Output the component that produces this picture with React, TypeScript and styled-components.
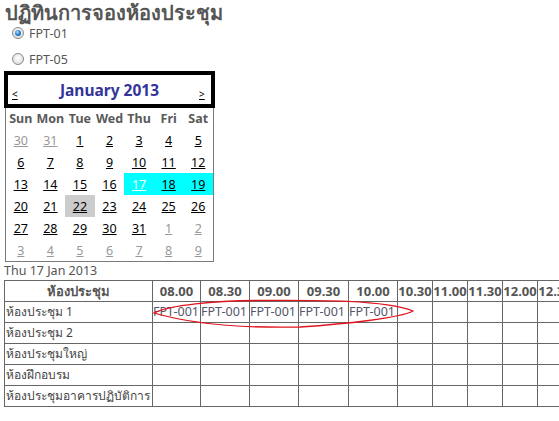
import React from "react";
import styled, { createGlobalStyle } from "styled-components";

const GlobalStyle = createGlobalStyle`
  html, body {
    margin: 0;
    padding: 0;
    background: #ffffff;
    overflow: hidden;
  }
  body {
    font-family: "Noto Sans", Tahoma, "DejaVu Sans", sans-serif;
    font-size: 12.5px;
    color: #555555;
  }
`;

const Page = styled.div`
  padding: 2px 0 0 4px;
  width: 900px;
`;

const Title = styled.h1`
  margin: 0 0 0 1px;
  font-size: 20px;
  line-height: 22px;
  font-weight: bold;
  color: #555555;
`;

const RadioList = styled.div`
  display: flex;
  flex-direction: column;
  margin-top: -4px;
`;

const RadioRow = styled.label`
  display: flex;
  align-items: center;
  height: 26px;
  padding-left: 8px;
  gap: 5px;
  color: #555555;
  font-size: 12.5px;
`;

const RadioDot = styled.span<{ $checked?: boolean }>`
  position: relative;
  width: 12px;
  height: 12px;
  border-radius: 50%;
  border: 1px solid #8a8a8a;
  background: radial-gradient(circle at 50% 40%, #ffffff 0%, #e6e6e6 60%, #cfcfcf 100%);
  box-sizing: border-box;
  &::after {
    content: "";
    display: ${(p) => (p.$checked ? "block" : "none")};
    position: absolute;
    left: 2px;
    top: 2px;
    width: 6px;
    height: 6px;
    border-radius: 50%;
    background: radial-gradient(circle at 40% 35%, #a8dcff 0%, #2a7fd0 50%, #0b3c74 100%);
  }
`;

const Calendar = styled.div`
  width: 211px;
  margin-top: -1px;
`;

const CalTitle = styled.div`
  border: 4px solid #000000;
  height: 29px;
  display: flex;
  align-items: center;
  padding: 0 4px;
`;

const NavLink = styled.span`
  align-self: flex-end;
  padding-bottom: 5px;
  font-size: 10px;
  line-height: 10px;
  color: #000000;
  text-decoration: underline;
  width: 8px;
`;

const MonthLabel = styled.div`
  flex: 1;
  text-align: center;
  font-weight: bold;
  font-size: 15.5px;
  color: #333399;
  padding-top: 1px;
`;

const DaysGrid = styled.div`
  margin-left: 1px;
  width: 209px;
  box-sizing: border-box;
  border: 1px solid #7a7a7a;
  border-top: none;
  display: grid;
  grid-template-columns: repeat(7, 1fr);
  grid-auto-rows: 22px;
  grid-template-rows: 21px;
`;

const DayName = styled.div`
  display: flex;
  align-items: center;
  justify-content: center;
  font-weight: bold;
  color: #5a5a5a;
  font-size: 12.5px;
`;

const DayCell = styled.div<{ $other?: boolean; $week?: boolean; $selected?: boolean; $today?: boolean }>`
  display: flex;
  align-items: center;
  justify-content: center;
  font-size: 12.5px;
  text-decoration: underline;
  color: ${(p) => (p.$today ? "#ffffff" : p.$other ? "#999999" : "#000000")};
  background: ${(p) => (p.$week ? "#00ffff" : p.$selected ? "#cccccc" : "transparent")};
`;

const DateLabel = styled.div`
  height: 18px;
  line-height: 18px;
  color: #555555;
  font-size: 12.5px;
`;

const TableWrap = styled.div`
  position: relative;
`;

const Schedule = styled.table<{ $width: number }>`
  border-collapse: collapse;
  table-layout: fixed;
  width: ${(p) => p.$width}px;
  border: 1px solid #666666;
`;

const HeadCell = styled.th`
  border: 1px solid #666666;
  height: 20px;
  line-height: 18px;
  padding: 0;
  font-weight: bold;
  font-size: 13px;
  color: #555555;
  text-align: center;
  white-space: nowrap;
  overflow: hidden;
`;

const RoomCell = styled.td`
  border: 1px solid #666666;
  height: 20px;
  line-height: 18px;
  padding: 0 0 0 1px;
  color: #444444;
  font-size: 12px;
  white-space: nowrap;
  overflow: hidden;
`;

const SlotCell = styled.td`
  border: 1px solid #666666;
  height: 20px;
  line-height: 18px;
  padding: 0;
  color: #55556a;
  font-size: 12.5px;
  text-align: left;
  white-space: nowrap;
  overflow: hidden;
`;

const Circle = styled.svg`
  position: absolute;
  left: 0;
  top: 0;
  width: 460px;
  height: 60px;
  pointer-events: none;
  overflow: visible;
`;

const weeks: { d: number; other?: boolean }[][] = [
  [{ d: 30, other: true }, { d: 31, other: true }, { d: 1 }, { d: 2 }, { d: 3 }, { d: 4 }, { d: 5 }],
  [6, 7, 8, 9, 10, 11, 12].map((d) => ({ d })),
  [13, 14, 15, 16, 17, 18, 19].map((d) => ({ d })),
  [20, 21, 22, 23, 24, 25, 26].map((d) => ({ d })),
  [{ d: 27 }, { d: 28 }, { d: 29 }, { d: 30 }, { d: 31 }, { d: 1, other: true }, { d: 2, other: true }],
  [3, 4, 5, 6, 7, 8, 9].map((d) => ({ d, other: true })),
];

const ROOM_COL = 148;

const slots = [
  { t: "08.00", w: 48 },
  { t: "08.30", w: 49 },
  { t: "09.00", w: 49 },
  { t: "09.30", w: 50 },
  { t: "10.00", w: 49 },
  { t: "10.30", w: 35 },
  { t: "11.00", w: 35 },
  { t: "11.30", w: 35 },
  { t: "12.00", w: 35 },
  { t: "12.30", w: 35 },
  { t: "13.00", w: 35 },
  { t: "13.30", w: 35 },
];

const tableWidth = ROOM_COL + slots.reduce((a, s) => a + s.w, 0);

const rooms = [
  { name: "ห้องประชุม 1", booked: 5 },
  { name: "ห้องประชุม 2", booked: 0 },
  { name: "ห้องประชุมใหญ่", booked: 0 },
  { name: "ห้องฝึกอบรม", booked: 0 },
  { name: "ห้องประชุมอาคารปฏิบัติการ", booked: 0 },
];

export default function App() {
  return (
    <>
      <GlobalStyle />
      <Page>
        <Title>ปฏิทินการจองห้องประชุม</Title>
        <RadioList>
          <RadioRow>
            <RadioDot $checked />
            FPT-01
          </RadioRow>
          <RadioRow>
            <RadioDot />
            FPT-05
          </RadioRow>
        </RadioList>
        <Calendar>
          <CalTitle>
            <NavLink>&lt;</NavLink>
            <MonthLabel>January 2013</MonthLabel>
            <NavLink>&gt;</NavLink>
          </CalTitle>
          <DaysGrid>
            {["Sun", "Mon", "Tue", "Wed", "Thu", "Fri", "Sat"].map((n) => (
              <DayName key={n}>{n}</DayName>
            ))}
            {weeks.map((w, wi) =>
              w.map((c, ci) => {
                const week = wi === 2 && ci >= 4;
                return (
                  <DayCell
                    key={`${wi}-${ci}`}
                    $other={c.other}
                    $week={week}
                    $today={wi === 2 && ci === 4}
                    $selected={wi === 3 && ci === 2}
                  >
                    {c.d}
                  </DayCell>
                );
              })
            )}
          </DaysGrid>
        </Calendar>
        <DateLabel>Thu 17 Jan 2013</DateLabel>
        <TableWrap>
          <Schedule $width={tableWidth}>
            <colgroup>
              <col style={{ width: ROOM_COL }} />
              {slots.map((s) => (
                <col key={s.t} style={{ width: s.w }} />
              ))}
            </colgroup>
            <thead>
              <tr>
                <HeadCell>ห้องประชุม</HeadCell>
                {slots.map((s) => (
                  <HeadCell key={s.t}>{s.t}</HeadCell>
                ))}
              </tr>
            </thead>
            <tbody>
              {rooms.map((r) => (
                <tr key={r.name}>
                  <RoomCell>{r.name}</RoomCell>
                  {slots.map((s, i) => (
                    <SlotCell key={s.t}>{i < r.booked ? "FPT-001" : ""}</SlotCell>
                  ))}
                </tr>
              ))}
            </tbody>
          </Schedule>
          <Circle viewBox="0 0 460 60">
            <path
              d="M150,33 C166,25 211,21 251,20.5 C316,20 381,20 409,31 C396,38 341,44 296,47 C246,48 191,45 150,33 Z"
              fill="none"
              stroke="#e0141e"
              strokeWidth="1.3"
            />
          </Circle>
        </TableWrap>
      </Page>
    </>
  );
}
